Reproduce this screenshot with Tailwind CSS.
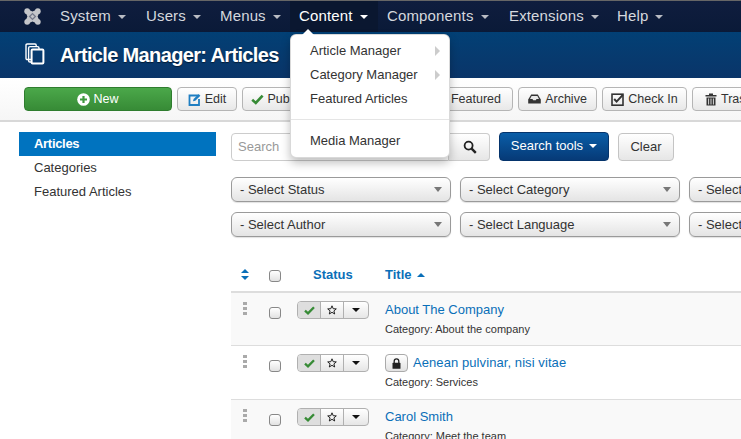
<!DOCTYPE html>
<html lang="en">
<head>
    <meta charset="UTF-8">
    <meta name="viewport" content="width=device-width, initial-scale=1.0">
    <title>Article Manager: Articles</title>
    <script src="https://cdn.jsdelivr.net/npm/@tailwindcss/browser@4"></script>
</head>
<body class="font-['Liberation_Sans',Arial,sans-serif] bg-white w-[741px] h-[439px] overflow-hidden relative text-[#333]">
    <!-- top nav -->
    <nav class="h-[32px] bg-linear-to-b from-[#0f1d3e] to-[#0a1a38] border-t border-[#666] flex items-center text-[15px] tracking-[0.15px] text-[#d5d8de] pl-[24px]">
        <svg class="w-[17px] h-[17px] mr-[19px]" viewBox="0 0 17 17" fill="none">
            <path d="M3 1 L8.5 3.4 L14 1 L16 3 L13.6 8.5 L16 14 L14 16 L8.5 13.6 L3 16 L1 14 L3.4 8.5 L1 3 Z" fill="#c4c6ca"/>
            <circle cx="3.2" cy="3.2" r="2.9" fill="#c4c6ca"/>
            <circle cx="13.8" cy="3.2" r="2.9" fill="#c4c6ca"/>
            <circle cx="3.2" cy="13.8" r="2.9" fill="#c4c6ca"/>
            <circle cx="13.8" cy="13.8" r="2.9" fill="#c4c6ca"/>
            <path d="M5.6 8.5 L8.5 5.6 L11.4 8.5 L8.5 11.4 Z" stroke="#767b8c" stroke-width="1.3"/>
        </svg>
        <a class="flex items-center gap-[7px] w-[86px]">System <i class="w-0 h-0 border-x-[4px] border-x-transparent border-t-[4px] border-t-[#b9bcc4]"></i></a>
        <a class="flex items-center gap-[7px] w-[74px]">Users <i class="w-0 h-0 border-x-[4px] border-x-transparent border-t-[4px] border-t-[#b9bcc4]"></i></a>
        <a class="flex items-center gap-[7px] w-[70px]">Menus <i class="w-0 h-0 border-x-[4px] border-x-transparent border-t-[4px] border-t-[#b9bcc4]"></i></a>
        <a class="flex items-center gap-[7px] w-[88px] text-white h-full pl-[9px] bg-[#0a1730]">Content <i class="w-0 h-0 border-x-[4px] border-x-transparent border-t-[4px] border-t-white"></i></a>
        <a class="flex items-center gap-[7px] w-[122px] ml-[9px]">Components <i class="w-0 h-0 border-x-[4px] border-x-transparent border-t-[4px] border-t-[#b9bcc4]"></i></a>
        <a class="flex items-center gap-[7px] w-[108px]">Extensions <i class="w-0 h-0 border-x-[4px] border-x-transparent border-t-[4px] border-t-[#b9bcc4]"></i></a>
        <a class="flex items-center gap-[7px]">Help <i class="w-0 h-0 border-x-[4px] border-x-transparent border-t-[4px] border-t-[#b9bcc4]"></i></a>
    </nav>

    <!-- page title -->
    <header class="h-[46px] bg-linear-to-b from-[#024075] to-[#0a3569] flex items-center pl-[25px] text-white">
        <svg class="w-[20px] h-[22px] mr-[15px] -mt-[3px]" viewBox="0 0 20 22" fill="none" stroke="white" stroke-width="1.4">
            <path d="M6 16.5 H2.2 Q1 16.5 1 15.3 V2.2 Q1 1 2.2 1 H10 Q11.2 1 11.2 2.2 V3"/>
            <path d="M7 19 H5 Q3.6 19 3.6 17.8 V5 Q3.6 3.6 5 3.6 H12.5 Q14 3.6 14 5 V6"/>
            <rect x="6.6" y="6.6" width="11.8" height="14" rx="1" stroke-width="2"/>
        </svg>
        <h1 class="text-[20px] font-bold tracking-[-0.65px] [text-shadow:0_1px_1px_rgba(0,0,0,0.5)]">Article Manager: Articles</h1>
    </header>

    <!-- toolbar -->
    <div class="h-[44px] border-b-2 border-[#d8d8d8] bg-linear-to-b from-white to-[#f6f6f6] flex items-center pl-[24px] gap-[5px] text-[12.5px] whitespace-nowrap overflow-hidden">
        <button class="w-[148px] h-[24px] shrink-0 rounded-[4px] bg-linear-to-b from-[#4ba84a] to-[#378b36] border border-[#2f7d2f] text-white flex items-center justify-center gap-[3px]">
            <svg class="w-[13px] h-[13px]" viewBox="0 0 13 13"><circle cx="6.5" cy="6.5" r="6.3" fill="white"/><path d="M6.5 3v7M3 6.5h7" stroke="#3f9a3f" stroke-width="2.2"/></svg>
            New
        </button>
        <button class="w-[60px] h-[24px] shrink-0 rounded-[4px] bg-linear-to-b from-white to-[#e8e8e8] border border-[#b5b5b5] flex items-center justify-center gap-[4px]">
            <svg class="w-[13px] h-[13px]" viewBox="0 0 13 13" fill="none"><path d="M10 2.5H1.5v9.5H11V6" stroke="#1f7ec2" stroke-width="1.8"/><path d="M5 8.2 5.6 6 10.6 1 12.4 2.8 7.3 7.8Z" fill="#1f7ec2"/></svg>
            Edit
        </button>
        <button class="w-[75px] h-[24px] shrink-0 rounded-[4px] bg-linear-to-b from-white to-[#e8e8e8] border border-[#b5b5b5] flex items-center justify-center gap-[4px]">
            <svg class="w-[13px] h-[11px]" viewBox="0 0 13 11" fill="none"><path d="M1.2 5.8 4.8 9 11.6 1.6" stroke="#378b36" stroke-width="2.6"/></svg>
            Publish
        </button>
        <button class="w-[105px] h-[24px] shrink-0 rounded-[4px] bg-linear-to-b from-white to-[#e8e8e8] border border-[#b5b5b5]">Unpublish</button>
        <button class="w-[81px] h-[24px] shrink-0 rounded-[4px] bg-linear-to-b from-white to-[#e8e8e8] border border-[#b5b5b5] flex items-center justify-end pr-[11px] gap-[4px]">
            <svg class="w-[12px] h-[12px]" viewBox="0 0 10 10" fill="#c0392b"><path d="M5 .5 6.3 3.6 9.6 3.8 7.1 6 7.9 9.4 5 7.6 2.1 9.4 2.9 6 .4 3.8 3.7 3.6Z"/></svg>
            Featured
        </button>
        <button class="w-[79px] h-[24px] shrink-0 rounded-[4px] bg-linear-to-b from-white to-[#e8e8e8] border border-[#b5b5b5] flex items-center justify-center gap-[4px]">
            <svg class="w-[13px] h-[10px]" viewBox="0 0 13 10"><path d="M3.2 0.5H9.8L12.8 5.5V9.5H0.2V5.5Z" fill="#333"/><path d="M3.6 2H9.4L11 5H8.5L7.8 6.2H5.2L4.5 5H2Z" fill="#e8e8e8"/></svg>
            Archive
        </button>
        <button class="w-[85px] h-[24px] shrink-0 rounded-[4px] bg-linear-to-b from-white to-[#e8e8e8] border border-[#b5b5b5] flex items-center justify-center gap-[4px]">
            <svg class="w-[13px] h-[13px]" viewBox="0 0 13 13" fill="none"><rect x="1" y="1.2" width="11" height="11" stroke="#333" stroke-width="1.6"/><path d="M3.2 6 5.6 8.6 11.8 1.8" stroke="#333" stroke-width="2"/></svg>
            Check In
        </button>
        <button class="w-[70px] h-[24px] shrink-0 rounded-[4px] bg-linear-to-b from-white to-[#e8e8e8] border border-[#b5b5b5] flex items-center pl-[12px] gap-[4px]">
            <svg class="w-[12px] h-[13px]" viewBox="0 0 12 13"><path d="M4 0.5H8V2H11.5V3.5H0.5V2H4Z" fill="#333"/><path d="M1.5 4.5H10.5V12.5H1.5Z" fill="#333"/><path d="M3.6 5.5V11.5M6 5.5V11.5M8.4 5.5V11.5" stroke="#eee" stroke-width="0.9"/></svg>
            Trash
        </button>
    </div>

    <main class="flex">
        <!-- sidebar -->
        <aside class="ml-[19px] mt-[10px] w-[197px] text-[13px] shrink-0">
            <a class="block h-[24px] leading-[24px] pl-[15px] bg-[#0073bf] text-white font-bold tracking-[-0.3px]">Articles</a>
            <a class="block h-[24px] leading-[24px] pl-[15px]">Categories</a>
            <a class="block h-[24px] leading-[24px] pl-[15px]">Featured Articles</a>
        </aside>

        <section class="ml-[15px] mt-[10px] w-[510px] shrink-0 overflow-hidden">
            <!-- search row -->
            <div class="flex items-center h-[29px] text-[13px] whitespace-nowrap">
                <div class="w-[218px] h-[28px] border border-[#ccc] rounded-l-[4px] pl-[6px] leading-[26px] text-[#999] text-[13px] bg-white">Search</div>
                <button class="w-[41px] h-[28px] border border-[#ccc] border-l-0 rounded-r-[4px] bg-linear-to-b from-white to-[#e6e6e6] flex items-center justify-end pr-[12px]">
                    <svg class="w-[14px] h-[14px]" viewBox="0 0 14 14" fill="none" stroke="#222"><circle cx="5.6" cy="5.6" r="4" stroke-width="1.8"/><path d="M8.6 8.6 12.8 12.8" stroke-width="2.4"/></svg>
                </button>
                <button class="ml-[9px] w-[110px] h-[29px] rounded-[4px] bg-linear-to-b from-[#0a5ea8] to-[#063a77] border border-[#05346c] text-white flex items-center justify-center gap-[6px] pb-[2px]">Search tools <i class="w-0 h-0 border-x-[4px] border-x-transparent border-t-[4px] border-t-white"></i></button>
                <button class="ml-[9px] w-[56px] h-[28px] rounded-[4px] bg-linear-to-b from-white to-[#e6e6e6] border border-[#c4c4c4]">Clear</button>
            </div>

            <!-- filters -->
            <div class="mt-[16px] grid grid-cols-[220px_220px_220px] gap-x-[9px] gap-y-[10px] text-[13px] whitespace-nowrap">
                <div class="h-[25px] rounded-[6px] border border-[#9a9a9a] bg-linear-to-b from-white to-[#e4e4e4] flex items-center justify-between pl-[8px] pr-[8px] shadow-[0_1px_1px_rgba(0,0,0,0.12)]">- Select Status <i class="w-0 h-0 border-x-[4px] border-x-transparent border-t-[5px] border-t-[#777]"></i></div>
                <div class="h-[25px] rounded-[6px] border border-[#9a9a9a] bg-linear-to-b from-white to-[#e4e4e4] flex items-center justify-between pl-[8px] pr-[8px] shadow-[0_1px_1px_rgba(0,0,0,0.12)]">- Select Category <i class="w-0 h-0 border-x-[4px] border-x-transparent border-t-[5px] border-t-[#777]"></i></div>
                <div class="h-[25px] rounded-[6px] border border-[#9a9a9a] bg-linear-to-b from-white to-[#e4e4e4] flex items-center pl-[8px] shadow-[0_1px_1px_rgba(0,0,0,0.12)]">- Select</div>
                <div class="h-[25px] rounded-[6px] border border-[#9a9a9a] bg-linear-to-b from-white to-[#e4e4e4] flex items-center justify-between pl-[8px] pr-[8px] shadow-[0_1px_1px_rgba(0,0,0,0.12)]">- Select Author <i class="w-0 h-0 border-x-[4px] border-x-transparent border-t-[5px] border-t-[#777]"></i></div>
                <div class="h-[25px] rounded-[6px] border border-[#9a9a9a] bg-linear-to-b from-white to-[#e4e4e4] flex items-center justify-between pl-[8px] pr-[8px] shadow-[0_1px_1px_rgba(0,0,0,0.12)]">- Select Language <i class="w-0 h-0 border-x-[4px] border-x-transparent border-t-[5px] border-t-[#777]"></i></div>
                <div class="h-[25px] rounded-[6px] border border-[#9a9a9a] bg-linear-to-b from-white to-[#e4e4e4] flex items-center pl-[8px] shadow-[0_1px_1px_rgba(0,0,0,0.12)]">- Select</div>
            </div>

            <!-- table head -->
            <div class="mt-[21px] h-[35px] pt-[1px] border-b-2 border-[#ddd] flex items-center text-[13px] font-bold text-[#0a6fb8]">
                <svg class="w-[8px] h-[11px] ml-[10px] -mt-[2px]" viewBox="0 0 8 11" fill="#0a6fb8"><path d="M4 0 8 4H0Z"/><path d="M4 11 0 7H8Z"/></svg>
                <span class="ml-[20px] w-[12px] h-[12px] mt-[2px] rounded-[3px] border border-[#888] bg-linear-to-b from-white to-[#e2e2e2]"></span>
                <span class="ml-[32px] w-[72px]">Status</span>
                <span class="flex items-center gap-[5px]">Title <i class="w-0 h-0 border-x-[4px] border-x-transparent border-b-[4px] border-b-[#0a6fb8]"></i></span>
            </div>

            <!-- row 1 -->
            <div class="h-[53px] bg-[#f9f9f9] border-b border-[#ddd] flex">
                <svg class="w-[5px] h-[13px] ml-[12px] mt-[9px]" viewBox="0 0 5 13" fill="#aaa"><rect x="0" y="0" width="4" height="3"/><rect x="0" y="5" width="4" height="3"/><rect x="0" y="10" width="4" height="3"/></svg>
                <span class="ml-[21px] mt-[14px] w-[12px] h-[12px] rounded-[3px] border border-[#888] bg-linear-to-b from-white to-[#e2e2e2]"></span>
                <div class="ml-[16px] mt-[8px] w-[72px] h-[18px] flex rounded-[4px] border border-[#b0b0b0] bg-linear-to-b from-white to-[#e6e6e6]">
                    <span class="w-[23px] border-r border-[#b0b0b0] bg-[#dedede] rounded-l-[3px] flex items-center justify-center"><svg class="w-[11px] h-[9px]" viewBox="0 0 11 9" fill="none"><path d="M1 4.6 4 7.4 10 1.2" stroke="#378b36" stroke-width="2.3"/></svg></span>
                    <span class="w-[23px] border-r border-[#b0b0b0] flex items-center justify-center"><svg class="w-[10px] h-[10px]" viewBox="0 0 10 10" fill="none" stroke="#222" stroke-width="1"><path d="M5 .8 6.2 3.7 9.3 3.9 6.9 5.9 7.7 9 5 7.3 2.3 9 3.1 5.9.7 3.9 3.8 3.7Z"/></svg></span>
                    <span class="flex-1 flex items-center justify-center"><i class="w-0 h-0 border-x-[4px] border-x-transparent border-t-[4px] border-t-[#111]"></i></span>
                </div>
                <div class="ml-[16px] mt-[8px]">
                    <a class="block text-[13px] leading-[18px] text-[#0a6fb8]">About The Company</a>
                    <p class="mt-[2px] text-[11px] leading-[16px] text-[#333]">Category: About the company</p>
                </div>
            </div>

            <!-- row 2 -->
            <div class="h-[54px] bg-white border-b border-[#ddd] flex">
                <svg class="w-[5px] h-[13px] ml-[12px] mt-[9px]" viewBox="0 0 5 13" fill="#aaa"><rect x="0" y="0" width="4" height="3"/><rect x="0" y="5" width="4" height="3"/><rect x="0" y="10" width="4" height="3"/></svg>
                <span class="ml-[21px] mt-[14px] w-[12px] h-[12px] rounded-[3px] border border-[#888] bg-linear-to-b from-white to-[#e2e2e2]"></span>
                <div class="ml-[16px] mt-[8px] w-[72px] h-[18px] flex rounded-[4px] border border-[#b0b0b0] bg-linear-to-b from-white to-[#e6e6e6]">
                    <span class="w-[23px] border-r border-[#b0b0b0] bg-[#dedede] rounded-l-[3px] flex items-center justify-center"><svg class="w-[11px] h-[9px]" viewBox="0 0 11 9" fill="none"><path d="M1 4.6 4 7.4 10 1.2" stroke="#378b36" stroke-width="2.3"/></svg></span>
                    <span class="w-[23px] border-r border-[#b0b0b0] flex items-center justify-center"><svg class="w-[10px] h-[10px]" viewBox="0 0 10 10" fill="none" stroke="#222" stroke-width="1"><path d="M5 .8 6.2 3.7 9.3 3.9 6.9 5.9 7.7 9 5 7.3 2.3 9 3.1 5.9.7 3.9 3.8 3.7Z"/></svg></span>
                    <span class="flex-1 flex items-center justify-center"><i class="w-0 h-0 border-x-[4px] border-x-transparent border-t-[4px] border-t-[#111]"></i></span>
                </div>
                <div class="ml-[16px] mt-[8px]">
                    <div class="flex items-center gap-[5px]">
                        <span class="w-[23px] h-[18px] rounded-[4px] border border-[#aaa] bg-linear-to-b from-white to-[#e2e2e2] flex items-center justify-center"><svg class="w-[9px] h-[11px]" viewBox="0 0 9 11"><path d="M2.2 5V3.2a2.3 2.3 0 0 1 4.6 0V5" fill="none" stroke="#222" stroke-width="1.3"/><rect x="0.5" y="4.8" width="8" height="6" rx="0.6" fill="#222"/></svg></span>
                        <a class="text-[13px] tracking-[0.08px] leading-[18px] text-[#0a6fb8]">Aenean pulvinar, nisi vitae</a>
                    </div>
                    <p class="mt-[2px] text-[11px] leading-[16px] text-[#333]">Category: Services</p>
                </div>
            </div>

            <!-- row 3 -->
            <div class="h-[53px] bg-[#f9f9f9] flex">
                <svg class="w-[5px] h-[13px] ml-[12px] mt-[9px]" viewBox="0 0 5 13" fill="#aaa"><rect x="0" y="0" width="4" height="3"/><rect x="0" y="5" width="4" height="3"/><rect x="0" y="10" width="4" height="3"/></svg>
                <span class="ml-[21px] mt-[14px] w-[12px] h-[12px] rounded-[3px] border border-[#888] bg-linear-to-b from-white to-[#e2e2e2]"></span>
                <div class="ml-[16px] mt-[8px] w-[72px] h-[18px] flex rounded-[4px] border border-[#b0b0b0] bg-linear-to-b from-white to-[#e6e6e6]">
                    <span class="w-[23px] border-r border-[#b0b0b0] bg-[#dedede] rounded-l-[3px] flex items-center justify-center"><svg class="w-[11px] h-[9px]" viewBox="0 0 11 9" fill="none"><path d="M1 4.6 4 7.4 10 1.2" stroke="#378b36" stroke-width="2.3"/></svg></span>
                    <span class="w-[23px] border-r border-[#b0b0b0] flex items-center justify-center"><svg class="w-[10px] h-[10px]" viewBox="0 0 10 10" fill="none" stroke="#222" stroke-width="1"><path d="M5 .8 6.2 3.7 9.3 3.9 6.9 5.9 7.7 9 5 7.3 2.3 9 3.1 5.9.7 3.9 3.8 3.7Z"/></svg></span>
                    <span class="flex-1 flex items-center justify-center"><i class="w-0 h-0 border-x-[4px] border-x-transparent border-t-[4px] border-t-[#111]"></i></span>
                </div>
                <div class="ml-[16px] mt-[8px]">
                    <a class="block text-[13px] leading-[18px] text-[#0a6fb8]">Carol Smith</a>
                    <p class="mt-[2px] text-[11px] leading-[16px] text-[#333]">Category: Meet the team</p>
                </div>
            </div>
        </section>
    </main>

    <!-- open Content menu -->
    <div class="absolute left-[290px] top-[34px] w-[160px] h-[124px] bg-white rounded-[6px] shadow-[0_5px_10px_rgba(0,0,0,0.25)] border border-black/15 text-[13px] text-[#333] pt-[4px]">
        <span class="absolute left-[11px] -top-[6px] w-0 h-0 border-x-[6px] border-x-transparent border-b-[6px] border-b-white"></span>
        <a class="flex items-center justify-between h-[24px] pl-[19px] pr-[9px]">Article Manager <i class="w-0 h-0 border-y-[5px] border-y-transparent border-l-[5px] border-l-[#ccc]"></i></a>
        <a class="flex items-center justify-between h-[24px] pl-[19px] pr-[9px]">Category Manager <i class="w-0 h-0 border-y-[5px] border-y-transparent border-l-[5px] border-l-[#ccc]"></i></a>
        <a class="flex items-center h-[24px] pl-[19px]">Featured Articles</a>
        <div class="mt-[8px] mb-[9px] border-t border-[#e5e5e5]"></div>
        <a class="flex items-center h-[24px] pl-[19px]">Media Manager</a>
    </div>
</body>
</html>
